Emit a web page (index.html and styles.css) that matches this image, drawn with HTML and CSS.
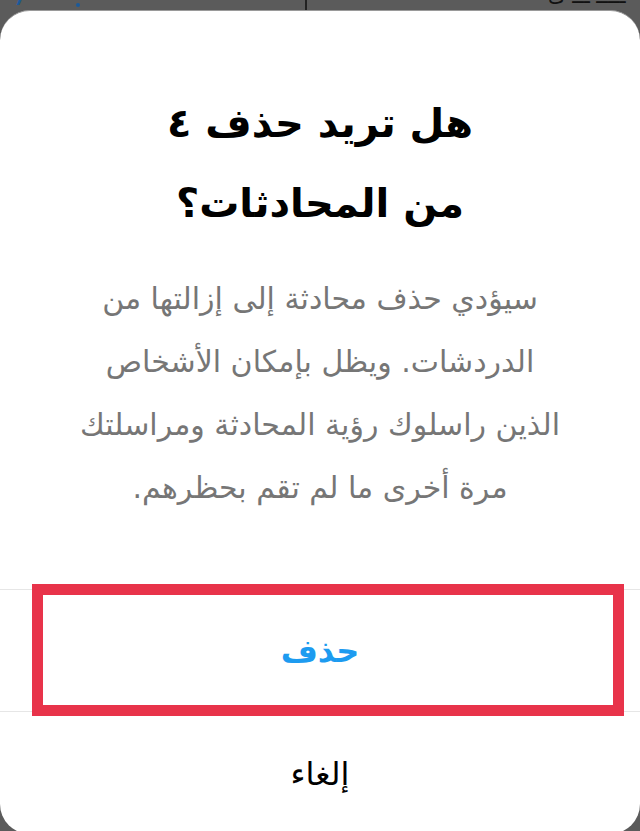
FILE: index.html
```html
<!DOCTYPE html>
<html lang="ar" dir="rtl">
<head>
<meta charset="utf-8">
<link rel="stylesheet" href="styles.css">
</head>
<body>
<div class="screen">
  <div class="behind">
    <span class="b-left">=)</span>
    <span class="b-dot"></span>
    <span class="b-line"></span>
    <span class="b-right">ـــــ ـــ ک</span>
  </div>
  <div class="sheet">
    <div class="content">
      <h1 class="title">هل تريد حذف ٤<br>من المحادثات؟</h1>
      <p class="desc">سيؤدي حذف محادثة إلى إزالتها من<br>الدردشات. ويظل بإمكان الأشخاص<br>الذين راسلوك رؤية المحادثة ومراسلتك<br>مرة أخرى ما لم تقم بحظرهم.</p>
    </div>
    <div class="actions">
      <div class="action delete">حذف</div>
      <div class="action cancel">إلغاء</div>
    </div>
  </div>
  <div class="highlight"></div>
</div>
</body>
</html>
```
FILE: styles.css
```css
* { box-sizing: border-box; }
html, body { margin: 0; padding: 0; }
body {
  width: 640px;
  height: 831px;
  overflow: hidden;
  background: #5b5b5b;
  font-family: "DejaVu Sans", sans-serif;
}
.screen {
  position: relative;
  width: 640px;
  height: 831px;
  overflow: hidden;
}
.behind {
  height: 10px;
  position: relative;
  overflow: hidden;
  direction: ltr;
}
.b-left {
  position: absolute;
  left: 0;
  top: -14px;
  color: #1b5a9a;
  font: bold 18px "DejaVu Sans", sans-serif;
}
.b-dot {
  position: absolute;
  left: 76px;
  top: 3px;
  width: 4px;
  height: 4px;
  border-radius: 50%;
  background: #1b5a9a;
}
.b-line {
  position: absolute;
  left: 305px;
  top: 0;
  width: 2px;
  height: 10px;
  background: #222;
}
.b-right {
  position: absolute;
  left: 548px;
  top: -16px;
  color: #111;
  font-size: 20px;
}
.sheet {
  background: #fff;
  border-radius: 30px;
  border-top: 1px solid #9a9a9a;
  height: 824px;
  display: flex;
  flex-direction: column;
}
.content {
  padding: 0 20px;
  text-align: center;
}
.title {
  margin: 72px 0 0;
  font-family: "DejaVu Sans", sans-serif;
  font-weight: bold;
  font-size: 40px;
  line-height: 80px;
  color: #000;
}
.desc {
  margin: 24px 0 0;
  font-size: 30px;
  line-height: 63px;
  color: #767676;
  white-space: nowrap;
}
.actions {
  margin-top: 70px;
  display: flex;
  flex-direction: column;
}
.action {
  height: 123px;
  display: flex;
  align-items: center;
  justify-content: center;
}
.delete {
  border-top: 1px solid #e6e6e6;
  border-bottom: 1px solid #e6e6e6;
  color: #1d9bf0;
  font-weight: bold;
  font-size: 32px;
}
.cancel {
  color: #000;
  font-size: 32px;
}
.highlight {
  position: absolute;
  left: 32px;
  top: 584px;
  width: 592px;
  height: 132px;
  border: 11px solid #e8334a;
}
```
